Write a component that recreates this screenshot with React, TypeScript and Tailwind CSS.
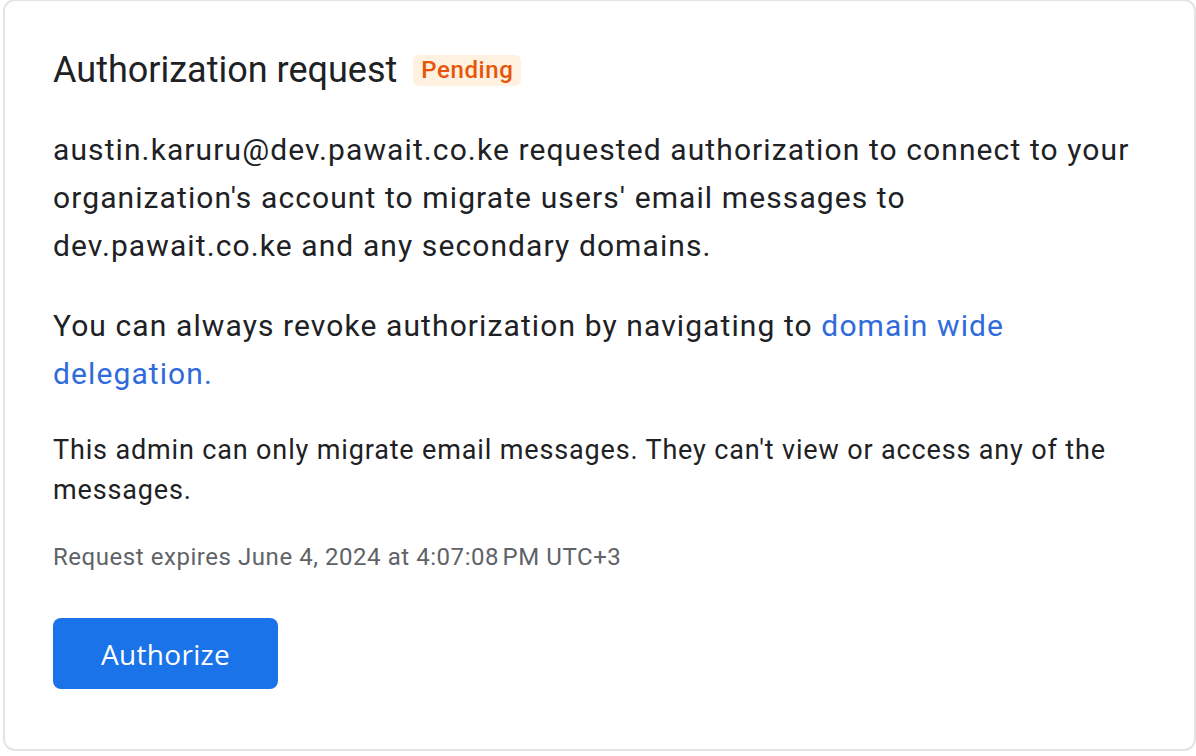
export default function App() {
  return (
    <div className="w-[1196px] h-[756px] bg-white overflow-hidden pl-[3px]" style={{ fontFamily: "Roboto, 'Liberation Sans', sans-serif" }}>
      <div className="w-[1193px] h-[752px] -mt-[1px] border-2 border-[#e3e3e3] rounded-[12px] bg-white pl-[48px] pr-[50px] pt-[47px]">
        <div className="flex items-center h-[44px]">
          <h1 className="text-[36px] leading-[44px] text-[#202124] font-normal">Authorization request</h1>
          <span className="ml-[16px] px-[8px] h-[31px] flex items-center rounded-[6px] bg-[#fef1e0] text-[#e8550a] text-[24px] font-medium tracking-[0.6px]">Pending</span>
        </div>
        <p className="mt-[34px] text-[30px] leading-[48px] tracking-[1.1px] text-[#202124]">
          austin.karuru@dev.pawait.co.ke requested authorization to connect to your organization's account to migrate users' email messages to dev.pawait.co.ke and any secondary domains.
        </p>
        <p className="mt-[32px] text-[30px] leading-[48px] tracking-[1.1px] text-[#202124]">
          You can always revoke authorization by navigating to <a className="text-[#2f6bdb]">domain wide delegation.</a>
        </p>
        <p className="mt-[32px] text-[27px] leading-[40px] tracking-[0.85px] text-[#202124]">
          This admin can only migrate email messages. They can't view or access any of the messages.
        </p>
        <p className="mt-[31px] text-[24px] leading-[32px] tracking-[0.55px] text-[#5f6368]">Request expires June 4, 2024 at 4:07:08&#8239;PM UTC+3</p>
        <button className="mt-[45px] w-[225px] h-[71px] rounded-[8px] bg-[#1a73e8] text-white text-[28px] font-medium tracking-[0.3px]" style={{ fontFamily: "'Open Sans', sans-serif" }}>Authorize</button>
      </div>
    </div>
  );
}
